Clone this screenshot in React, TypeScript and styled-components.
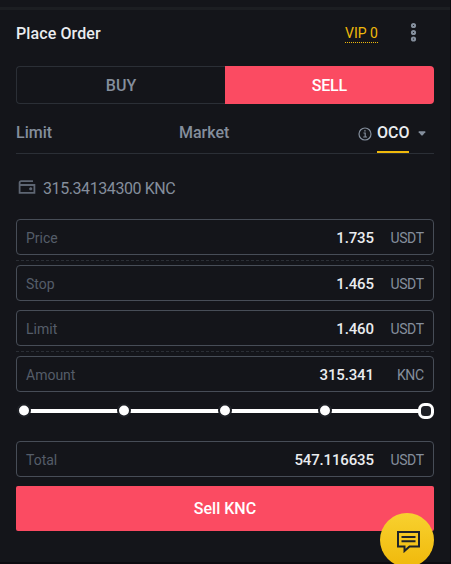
import React from 'react';
import styled, { createGlobalStyle, css } from 'styled-components';

const GlobalStyle = createGlobalStyle`
  * { box-sizing: border-box; }
  html, body { margin: 0; background: #14151a; }
  body { overflow: hidden; }
`;

const Page = styled.main`
  position: relative;
  width: 451px;
  height: 564px;
  overflow: hidden;
  background: #14151a;
  border-right: 1px solid #0c0b0f;
  font-family: Roboto, 'Liberation Sans', sans-serif;
  color: #848e9c;
  display: flex;
  flex-direction: column;
`;

const TopEdge = styled.div`
  flex: none;
  height: 10px;
  border-bottom: 3px solid #1c1e22;
`;

const BottomEdge = styled.div`
  flex: none;
  height: 2px;
  margin-top: auto;
  background: #0c0b10;
`;

const Panel = styled.section`
  display: flex;
  flex-direction: column;
  padding: 0 16px;
  width: 450px;
`;

const Label = styled.span<{ $size: number; $spacing?: number; $weight?: number; $color?: string }>`
  font-size: ${(p) => p.$size}px;
  line-height: 20px;
  letter-spacing: ${(p) => p.$spacing ?? 0}px;
  margin-right: ${(p) => -(p.$spacing ?? 0)}px;
  font-weight: ${(p) => p.$weight ?? 400};
  color: ${(p) => p.$color ?? '#848e9c'};
  white-space: nowrap;
`;

const Header = styled.header`
  display: flex;
  align-items: center;
  height: 46px;
`;

const Title = styled.div`
  display: flex;
  padding-top: 2px;
`;

const VipLink = styled.div`
  display: flex;
  width: 33px;
  height: 20px;
  margin: 0 32px 0 auto;
  border-bottom: 1px dotted #f0b90b;
`;

const DotsIcon = styled.svg`
  width: 7px;
  height: 20px;
  margin: 0 17px 2px 0;
`;

const SideSwitch = styled.div`
  display: grid;
  grid-template-columns: 1fr 1fr;
  height: 38px;
  margin-top: 10px;
`;

const Side = styled.button<{ $active?: boolean }>`
  display: flex;
  align-items: center;
  justify-content: center;
  padding: 2px 0 0;
  font-family: inherit;
  border: 1px solid #2b2f36;
  border-right: 0;
  border-radius: 4px 0 0 4px;
  background: transparent;
  ${(p) =>
    p.$active &&
    css`
      border: 0;
      border-radius: 0 4px 4px 0;
      background: #fb4b62;
    `}
`;

const Tabs = styled.nav`
  display: flex;
  align-items: flex-start;
  height: 35px;
  margin: 15px 0 14px;
  padding-top: 4px;
  border-bottom: 1px solid #2b2f36;
`;

const Tab = styled.div<{ $width: number }>`
  display: flex;
  width: ${(p) => p.$width}px;
`;

const ActiveTab = styled.div`
  display: flex;
  width: 32px;
  height: 30px;
  border-bottom: 2px solid #f0b90b;
`;

const InfoIcon = styled.svg`
  width: 14px;
  height: 14px;
  margin: 4px 5px 0 0;
`;

const Caret = styled.svg`
  width: 8px;
  height: 5px;
  margin: 8px 0 0 9px;
`;

const Balance = styled.div`
  display: flex;
  align-items: center;
  height: 40px;
  gap: 7px;
  padding: 2px 0 0 2px;
`;

const WalletIcon = styled.svg`
  width: 18px;
  height: 16px;
  margin-bottom: 4px;
`;

const Field = styled.div<{ $top: number }>`
  display: flex;
  align-items: center;
  height: 36px;
  margin-top: ${(p) => p.$top}px;
  padding: 1px 9px 0;
  border: 1px solid #474d57;
  border-radius: 4px;
`;

const Value = styled.div`
  display: flex;
  margin-left: auto;
`;

const Unit = styled.div`
  display: flex;
  justify-content: flex-end;
  width: 50px;
`;

const Dashed = styled.div`
  height: 1px;
  margin-top: 5px;
  background: repeating-linear-gradient(90deg, #2b2f36 0 3px, transparent 3px 5px);
`;

const Slider = styled.svg`
  display: block;
  width: 418px;
  height: 18px;
  margin-top: 10px;
`;

const Submit = styled.button`
  display: flex;
  align-items: center;
  justify-content: center;
  height: 45px;
  margin-top: 9px;
  padding: 0;
  border: 0;
  border-radius: 2px;
  background: #fb4b62;
  font-family: inherit;
`;

const ChatButton = styled.button`
  position: absolute;
  left: 380px;
  top: 513px;
  width: 54px;
  height: 54px;
  padding: 0;
  border: 0;
  border-radius: 50%;
  background: linear-gradient(#f8d12f, #f0b90b);
`;

const ChatIcon = styled.svg`
  display: block;
  width: 24px;
  height: 24px;
  margin: 1px 0 0 16px;
`;

type FieldRowProps = {
  top: number;
  label: string;
  value: string;
  valueSpacing?: number;
  unit: string;
};

const FieldRow = ({ top, label, value, valueSpacing = -0.15, unit }: FieldRowProps) => (
  <Field $top={top}>
    <Label $size={14} $color="#555d69">{label}</Label>
    <Value>
      <Label $size={15} $weight={500} $spacing={valueSpacing} $color="#eaecef">{value}</Label>
    </Value>
    <Unit>
      <Label $size={14} $spacing={-0.4}>{unit}</Label>
    </Unit>
  </Field>
);

const stops = [8, 108, 209, 309];

export default function App() {
  return (
    <>
      <GlobalStyle />
      <Page>
        <TopEdge />
        <Panel>
          <Header>
            <Title>
              <Label $size={16} $weight={500} $spacing={0.1} $color="#eaecef">Place Order</Label>
            </Title>
            <VipLink>
              <Label $size={14} $color="#f0b90b">VIP 0</Label>
            </VipLink>
            <DotsIcon viewBox="0 0 7 20" fill="none" stroke="#848e9c" strokeWidth="2">
              <circle cx="3.5" cy="3.5" r="1.6" />
              <circle cx="3.5" cy="10.5" r="1.6" />
              <circle cx="3.5" cy="17" r="1.6" />
            </DotsIcon>
          </Header>
          <SideSwitch>
            <Side><Label $size={16} $weight={500}>BUY</Label></Side>
            <Side $active><Label $size={16} $weight={500} $spacing={-0.25} $color="#fff">SELL</Label></Side>
          </SideSwitch>
          <Tabs>
            <Tab $width={163}><Label $size={16} $weight={500}>Limit</Label></Tab>
            <Tab $width={179}><Label $size={16} $weight={500}>Market</Label></Tab>
            <InfoIcon viewBox="0 0 14 14" fill="none" stroke="#848e9c" strokeWidth="1.2">
              <circle cx="7" cy="7" r="6" />
              <path d="M5.5 6h1.7v4M5.2 10h3.8M6.2 3.9h1.5" />
            </InfoIcon>
            <ActiveTab><Label $size={16} $weight={500} $color="#eaecef">OCO</Label></ActiveTab>
            <Caret viewBox="0 0 8 5"><path d="M.7.3h6.6v1L4.5 4.5h-1L.7 1.3z" fill="#848e9c" /></Caret>
          </Tabs>
          <Balance>
            <WalletIcon viewBox="0 0 18 16" fill="none" stroke="#5e6673" strokeWidth="1.8">
              <path d="M15 2.2H3.1a1.5 1.5 0 0 0-1.5 1.5v10.1h14.8V6H2M11.2 9.8h3M12.7 8.3v3" />
            </WalletIcon>
            <Label $size={16} $spacing={-0.42}>315.34134300 KNC</Label>
          </Balance>
          <FieldRow top={11} label="Price" value="1.735" unit="USDT" />
          <Dashed />
          <FieldRow top={4} label="Stop" value="1.465" unit="USDT" />
          <FieldRow top={9} label="Limit" value="1.460" unit="USDT" />
          <Dashed />
          <FieldRow top={4} label="Amount" value="315.341" unit="KNC" />
          <Slider viewBox="0 0 418 18">
            <path d="M8 9h402" stroke="#fff" strokeWidth="4" />
            {stops.map((x) => (
              <circle key={x} cx={x} cy="8.5" r="6" fill="#fff" stroke="#1e2026" strokeWidth="2" />
            ))}
            <rect x="403.5" y="2.5" width="13" height="13" rx="5" fill="#1e2026" stroke="#fff" strokeWidth="3" />
          </Slider>
          <FieldRow top={21} label="Total" value="547.116635" unit="USDT" />
          <Submit><Label $size={16} $weight={500} $color="#fff">Sell KNC</Label></Submit>
        </Panel>
        <BottomEdge />
        <ChatButton aria-label="Chat">
          <ChatIcon viewBox="0 0 24 24" fill="none" stroke="#1e2329" strokeWidth="2">
            <path d="M2 3h21v14.5h-9.5L8.5 22v-4.5H2zM5.5 8h14M5.5 12.3h14" />
          </ChatIcon>
        </ChatButton>
      </Page>
    </>
  );
}
